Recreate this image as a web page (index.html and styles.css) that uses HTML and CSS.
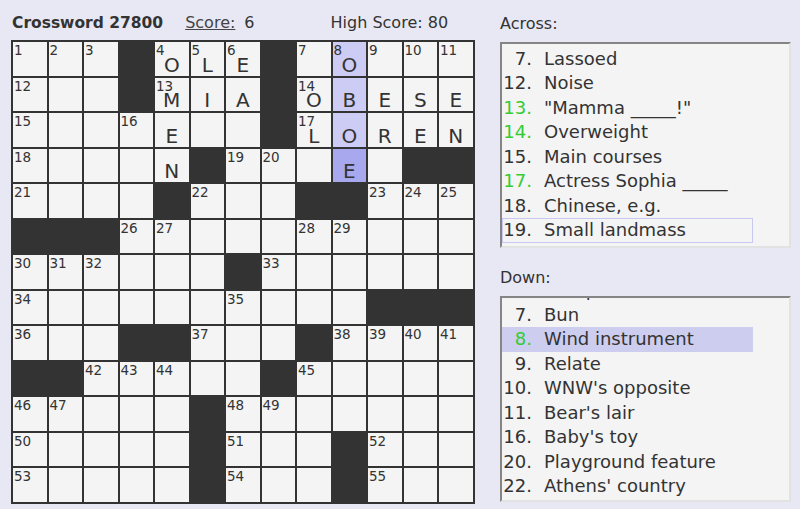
FILE: index.html
```html
<!DOCTYPE html>
<html>
<head>
<meta charset="utf-8">
<link rel="stylesheet" href="styles.css">
</head>
<body>
<div class="page">
  <div class="left">
    <div class="head">
      <span class="title">Crossword 27800</span>
      <a class="score-link">Score:</a>
      <span class="score">6</span>
      <span class="high">High Score: 80</span>
    </div>
    <div class="grid">
      <div class="c"><span class="n">1</span></div><div class="c"><span class="n">2</span></div><div class="c"><span class="n">3</span></div><div class="b"></div><div class="c"><span class="n">4</span><span class="l">O</span></div><div class="c"><span class="n">5</span><span class="l">L</span></div><div class="c"><span class="n">6</span><span class="l">E</span></div><div class="b"></div><div class="c"><span class="n">7</span></div><div class="c h"><span class="n">8</span><span class="l">O</span></div><div class="c"><span class="n">9</span></div><div class="c"><span class="n">10</span></div><div class="c"><span class="n">11</span></div>
      <div class="c"><span class="n">12</span></div><div class="c"></div><div class="c"></div><div class="b"></div><div class="c"><span class="n">13</span><span class="l">M</span></div><div class="c"><span class="l">I</span></div><div class="c"><span class="l">A</span></div><div class="b"></div><div class="c"><span class="n">14</span><span class="l">O</span></div><div class="c h"><span class="l">B</span></div><div class="c"><span class="l">E</span></div><div class="c"><span class="l">S</span></div><div class="c"><span class="l">E</span></div>
      <div class="c"><span class="n">15</span></div><div class="c"></div><div class="c"></div><div class="c"><span class="n">16</span></div><div class="c"><span class="l">E</span></div><div class="c"></div><div class="c"></div><div class="b"></div><div class="c"><span class="n">17</span><span class="l">L</span></div><div class="c h"><span class="l">O</span></div><div class="c"><span class="l">R</span></div><div class="c"><span class="l">E</span></div><div class="c"><span class="l">N</span></div>
      <div class="c"><span class="n">18</span></div><div class="c"></div><div class="c"></div><div class="c"></div><div class="c"><span class="l">N</span></div><div class="b"></div><div class="c"><span class="n">19</span></div><div class="c"><span class="n">20</span></div><div class="c"></div><div class="c cur"><span class="l">E</span></div><div class="c"></div><div class="b"></div><div class="b"></div>
      <div class="c"><span class="n">21</span></div><div class="c"></div><div class="c"></div><div class="c"></div><div class="b"></div><div class="c"><span class="n">22</span></div><div class="c"></div><div class="c"></div><div class="b"></div><div class="b"></div><div class="c"><span class="n">23</span></div><div class="c"><span class="n">24</span></div><div class="c"><span class="n">25</span></div>
      <div class="b"></div><div class="b"></div><div class="b"></div><div class="c"><span class="n">26</span></div><div class="c"><span class="n">27</span></div><div class="c"></div><div class="c"></div><div class="c"></div><div class="c"><span class="n">28</span></div><div class="c"><span class="n">29</span></div><div class="c"></div><div class="c"></div><div class="c"></div>
      <div class="c"><span class="n">30</span></div><div class="c"><span class="n">31</span></div><div class="c"><span class="n">32</span></div><div class="c"></div><div class="c"></div><div class="c"></div><div class="b"></div><div class="c"><span class="n">33</span></div><div class="c"></div><div class="c"></div><div class="c"></div><div class="c"></div><div class="c"></div>
      <div class="c"><span class="n">34</span></div><div class="c"></div><div class="c"></div><div class="c"></div><div class="c"></div><div class="c"></div><div class="c"><span class="n">35</span></div><div class="c"></div><div class="c"></div><div class="c"></div><div class="b"></div><div class="b"></div><div class="b"></div>
      <div class="c"><span class="n">36</span></div><div class="c"></div><div class="c"></div><div class="b"></div><div class="b"></div><div class="c"><span class="n">37</span></div><div class="c"></div><div class="c"></div><div class="b"></div><div class="c"><span class="n">38</span></div><div class="c"><span class="n">39</span></div><div class="c"><span class="n">40</span></div><div class="c"><span class="n">41</span></div>
      <div class="b"></div><div class="b"></div><div class="c"><span class="n">42</span></div><div class="c"><span class="n">43</span></div><div class="c"><span class="n">44</span></div><div class="c"></div><div class="c"></div><div class="b"></div><div class="c"><span class="n">45</span></div><div class="c"></div><div class="c"></div><div class="c"></div><div class="c"></div>
      <div class="c"><span class="n">46</span></div><div class="c"><span class="n">47</span></div><div class="c"></div><div class="c"></div><div class="c"></div><div class="b"></div><div class="c"><span class="n">48</span></div><div class="c"><span class="n">49</span></div><div class="c"></div><div class="c"></div><div class="c"></div><div class="c"></div><div class="c"></div>
      <div class="c"><span class="n">50</span></div><div class="c"></div><div class="c"></div><div class="c"></div><div class="c"></div><div class="b"></div><div class="c"><span class="n">51</span></div><div class="c"></div><div class="c"></div><div class="b"></div><div class="c"><span class="n">52</span></div><div class="c"></div><div class="c"></div>
      <div class="c"><span class="n">53</span></div><div class="c"></div><div class="c"></div><div class="c"></div><div class="c"></div><div class="b"></div><div class="c"><span class="n">54</span></div><div class="c"></div><div class="c"></div><div class="b"></div><div class="c"><span class="n">55</span></div><div class="c"></div><div class="c"></div>
    </div>
  </div>
  <div class="right">
    <div class="label">Across:</div>
    <div class="box">
      <ul class="list across">
        <li><span class="num">7.</span><span class="txt">Lassoed</span></li>
        <li><span class="num">12.</span><span class="txt">Noise</span></li>
        <li><span class="num ok">13.</span><span class="txt">"Mamma _____!"</span></li>
        <li><span class="num ok">14.</span><span class="txt">Overweight</span></li>
        <li><span class="num">15.</span><span class="txt">Main courses</span></li>
        <li><span class="num ok">17.</span><span class="txt">Actress Sophia _____</span></li>
        <li><span class="num">18.</span><span class="txt">Chinese, e.g.</span></li>
        <li class="focus"><span class="num">19.</span><span class="txt">Small landmass</span></li>
      </ul>
    </div>
    <div class="label down-label">Down:</div>
    <div class="box">
      <ul class="list down">
        <li><span class="num">6.</span><span class="txt">Escapade</span></li>
        <li><span class="num">7.</span><span class="txt">Bun</span></li>
        <li class="sel"><span class="num ok">8.</span><span class="txt">Wind instrument</span></li>
        <li><span class="num">9.</span><span class="txt">Relate</span></li>
        <li><span class="num">10.</span><span class="txt">WNW's opposite</span></li>
        <li><span class="num">11.</span><span class="txt">Bear's lair</span></li>
        <li><span class="num">16.</span><span class="txt">Baby's toy</span></li>
        <li><span class="num">20.</span><span class="txt">Playground feature</span></li>
        <li><span class="num">22.</span><span class="txt">Athens' country</span></li>
      </ul>
    </div>
  </div>
</div>
</body>
</html>
```

FILE: styles.css
```css
html, body {
  margin: 0;
  padding: 0;
}
body {
  background: #e8e8f4;
  font-family: "DejaVu Sans", sans-serif;
  color: #333;
  width: 800px;
  height: 509px;
  overflow: hidden;
}
.page {
  display: flex;
  padding-left: 11px;
}
.left {
  width: 464px;
  display: flex;
  flex-direction: column;
}
.head {
  display: flex;
  align-items: baseline;
  height: 40px;
  box-sizing: border-box;
  padding-top: 13px;
  padding-left: 1px;
  font-size: 16px;
  line-height: 20px;
}
.title {
  font-weight: bold;
  font-size: 15.5px;
}
.score-link {
  margin-left: 22px;
  text-decoration: underline;
  color: #444;
}
.score {
  margin-left: 9px;
}
.high {
  margin-left: 76px;
}
.grid {
  display: grid;
  grid-template-columns: repeat(13, 33.5px);
  grid-auto-rows: 33.5px;
  gap: 2px;
  padding: 2px;
  background: #333;
  width: max-content;
}
.c {
  background: #f4f4f4;
  position: relative;
  display: flex;
  justify-content: center;
  align-items: flex-end;
}
.b {
  background: #333;
}
.h {
  background: #ccccf4;
}
.cur {
  background: #a8a8ee;
}
.n {
  position: absolute;
  left: 1px;
  top: 1px;
  font-size: 13.5px;
  line-height: 14px;
}
.l {
  font-size: 20px;
  line-height: 22px;
  color: #333;
}
.right {
  margin-left: 25px;
  width: 291px;
  display: flex;
  flex-direction: column;
}
.label {
  font-size: 16px;
  line-height: 20px;
  padding-top: 14px;
  height: 42px;
  box-sizing: border-box;
}
.down-label {
  padding-top: 20px;
  height: 48px;
}
.box {
  height: 206px;
  box-sizing: border-box;
  border-style: solid;
  border-width: 2px;
  border-color: #858585 #e2e2e2 #e2e2e2 #858585;
  background: #f4f4f4;
  overflow: hidden;
}
.list {
  list-style: none;
  margin: 0;
  padding: 2.5px 0 0 0;
  width: 251px;
  font-size: 18px;
  line-height: 24.5px;
}
.list.down {
  margin-top: -22.5px;
}
.list li {
  display: flex;
  white-space: nowrap;
  box-sizing: border-box;
  height: 24.5px;
}
.num {
  display: inline-block;
  width: 29px;
  text-align: right;
  padding-left: 1px;
}
.ok {
  color: #33cc33;
}
.txt {
  margin-left: 12px;
}
.focus {
  outline: 1px solid #c8c8f0;
  outline-offset: -1px;
}
.sel {
  background: #cdcdf0;
}
```
